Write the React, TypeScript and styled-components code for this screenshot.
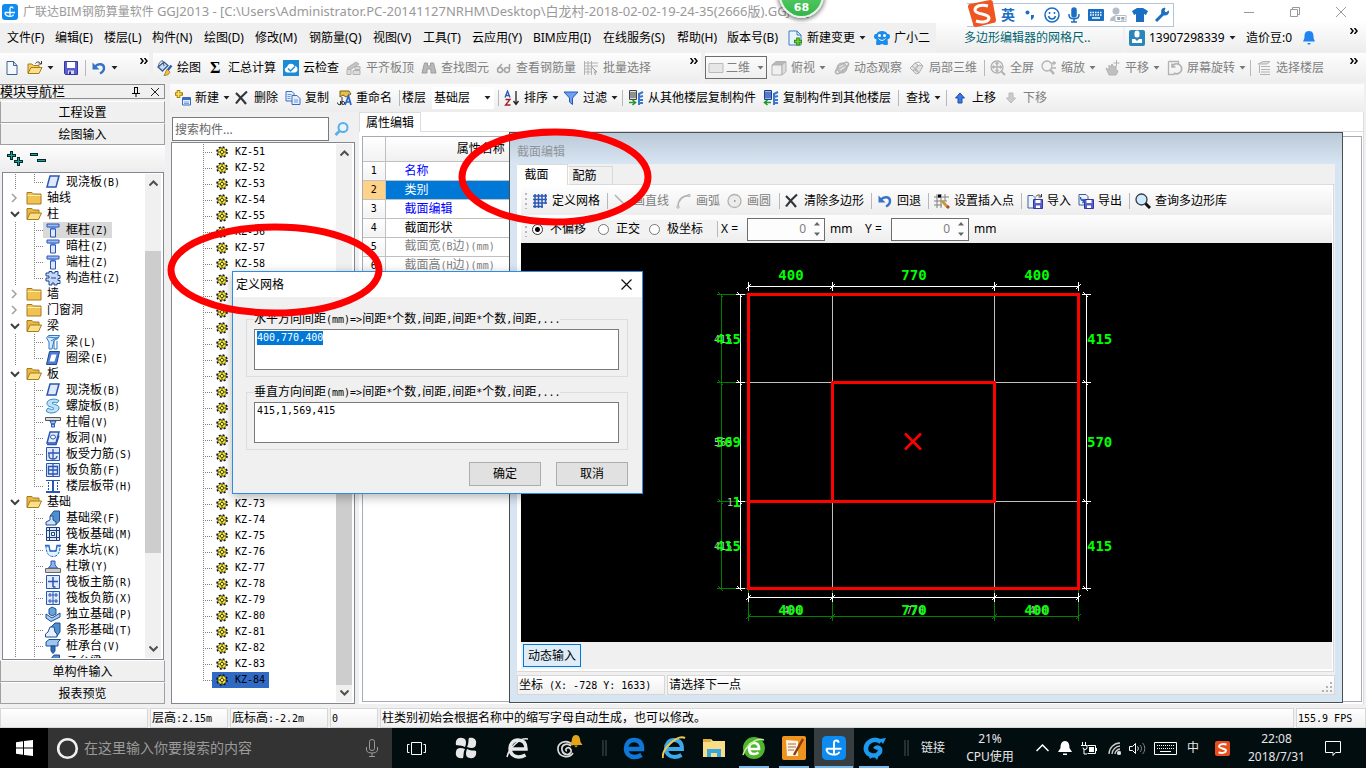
import React, { useEffect, useRef } from "react";
import styled, { createGlobalStyle, css } from "styled-components";

const ui = `"Noto Sans", "Noto Sans CJK SC", sans-serif`;
const mono = `"DejaVu Sans Mono", "Noto Sans CJK SC", monospace`;

const Global = createGlobalStyle`
  * { box-sizing: border-box; }
  body { margin: 0; background: #f0f0f0; font: 12px/16px ${ui}; color: #000; }
  button, input, select, textarea { font: inherit; color: inherit; }
  button { margin: 0; padding: 0; border: 0; background: none; cursor: pointer; white-space: nowrap; }
  ul { list-style: none; margin: 0; padding: 0; }
  svg { display: block; flex: none; }
`;

/* ---------- text with half-width latin glyphs ---------- */

const Half = styled.span`
  font-family: ${mono};
  font-size: 10px;
  white-space: pre;
`;

function Sim({ children }: { children: string }) {
  const parts = children.match(/[\x20-\x7e]+|[^\x20-\x7e]+/g) || [];
  return (
    <>
      {parts.map((p, i) => (/^[\x20-\x7e]/.test(p) ? <Half key={i}>{p}</Half> : <React.Fragment key={i}>{p}</React.Fragment>))}
    </>
  );
}

/* ---------- icons ---------- */

const g = "#b2b2b2";
const gl = "#dcdcdc";

const slab = (
  <path d="M5 2h9l-3 11H2z" fill="#dfeafa" stroke="#2a56b4" strokeWidth="1.5" />
);
const column = (
  <g>
    <path d="M2 2h12v3H2z" fill="#9dbcf0" stroke="#2a56b4" />
    <path d="M4 5h8l-2 2H6z" fill="#5c86d8" />
    <path d="M5.5 7h5v8h-5z" fill="#dbe8fc" stroke="#2a56b4" />
  </g>
);

const icons: Record<string, React.ReactNode> = {
  app: (
    <g>
      <rect width="16" height="16" rx="3" fill="#0d8bf0" />
      <path d="M2.800 8.500H13M8 4.500v7.500M8 4.500c0-2 3-2 3 0M3 8.500c0 4.800 8 4.800 8.500 2" stroke="#fff" strokeWidth="1.300" fill="none" />
    </g>
  ),
  file: <path d="M3 1.500h6.500l3.500 4v9H3z M9.500 1.500v4H13" fill="#f4f8ff" stroke="#41608f" />,
  open: (
    <g>
      <path d="M1 13V4h4l1.500 1.500H12V8" fill="#f3cf6b" stroke="#a87a1b" />
      <path d="M1 13.500L4 7.500h11l-3 6z" fill="#fbe08a" stroke="#a87a1b" />
      <path d="M8.500 3.500c1-2 4-2 5 0M14.500 1v3h-3" fill="none" stroke="#333" />
    </g>
  ),
  save: (
    <g>
      <path d="M1.500 1.500h13v13h-12l-1-1z" fill="#5a5fd0" stroke="#35389a" />
      <path d="M4 2h8v6H4z" fill="#fff" />
      <path d="M5 10.500h6V14H5z" fill="#d8daf5" />
      <path d="M6 11.500h2V14H6z" fill="#35389a" />
    </g>
  ),
  undo: (
    <g fill="none" stroke="#3672c8">
      <path d="M4 6.500C7 3 13 3.500 13 8c0 3-2 4.500-4 5.500" strokeWidth="2.400" />
      <path d="M1.500 2.500v7h7z" fill="#3672c8" stroke="none" />
    </g>
  ),
  bucket: (
    <g>
      <path d="M1 7l6-5 4 3.500L5.500 11z" fill="#c9dbf0" stroke="#355a8c" strokeWidth="1.300" />
      <path d="M1.500 7C1 4 4 0 6 1l1 5" fill="none" stroke="#355a8c" />
      <path d="M14.500 5.500L10 11" stroke="#2b5fb0" strokeWidth="2.400" />
      <path d="M10.500 9.500l2.500 2.500c-1 2.500-3 3.500-6 3.500 1.500-2 1.500-5 3.500-6z" fill="#f0c33c" stroke="#8c6a10" strokeWidth=".7" />
    </g>
  ),
  cloud: (
    <g>
      <rect width="16" height="16" fill="#1b8bd6" />
      <path d="M4 12.500a2.800 2.800 0 0 1 0-5.500 4 4 0 0 1 7.500-1A3.300 3.300 0 0 1 12 12.500z" fill="#fff" />
      <path d="M5 8.500l2.500 2.500L12 6.500" fill="none" stroke="#1b8bd6" strokeWidth="1.500" />
    </g>
  ),
  align: (
    <g fill={gl} stroke={g}>
      <path d="M1 8l9-6 3 2-9 6z" fill="#c4c4c4" />
      <path d="M1 9.500h4v5H1zM7 10.500h7v4H7zM9 6.500h5v3H9z" />
    </g>
  ),
  binoc: <path d="M3.500 3h3v3h3V3h3l2.500 10H10V9H6v4H1z" fill="#b8b8b8" stroke="#9c9c9c" />,
  glasses: (
    <g fill="none" stroke="#a5a5a5" strokeWidth="1.500">
      <circle cx="4" cy="10" r="2.500" />
      <circle cx="11" cy="10" r="2.500" />
      <path d="M6.500 10h2M1.500 9L6 4M13.500 9V4" />
    </g>
  ),
  batch: (
    <g stroke={g} fill="none">
      <path d="M1 3h14M1 6h14M1 9h7M1 12h7M1.500 1v14M5 1v14M8.500 1v14" />
      <path d="M9 7l5 5h-2.500l1 3" fill={gl} stroke="#999" />
    </g>
  ),
  plane: <path d="M1 3.500h14v9H1z" fill="#e6e6e6" stroke="#bbb" />,
  cube: (
    <g stroke={g}>
      <path d="M1 5l4-3.500h10L11 5z" fill="#b8b8b8" />
      <path d="M1 5h10v10H1z" fill="#f0f0f0" />
      <path d="M11 5l4-3.500v10L11 15z" fill={gl} />
    </g>
  ),
  orbit: (
    <g fill="none" stroke={g}>
      <circle cx="8" cy="8" r="5" fill="#c4c4c4" />
      <ellipse cx="8" cy="8" rx="8" ry="3" transform="rotate(-40 8 8)" strokeWidth="1.500" />
      <path d="M5 7l4-2M6 10l5-3" stroke="#eee" />
    </g>
  ),
  local3d: (
    <g fill="#e2e2e2" stroke={g}>
      <path d="M1 8l5-5 3 2-5 6zM6 10l4-5 4 1-4 7zM4 11l3 3 3-1-3-4z" />
      <path d="M6 3l4-1 4 4M3 6l6 5" fill="none" />
    </g>
  ),
  full: (
    <g fill="none" stroke={g} strokeWidth="1.300">
      <circle cx="7" cy="7" r="6" fill="#f2f2f2" />
      <path d="M7 2.500v9M2.500 7h9M5.500 4L7 2.500 8.500 4M5.500 10L7 11.500 8.500 10M4 5.500L2.500 7 4 8.500M10 5.500L11.500 7 10 8.500" />
      <path d="M11.500 11.500L15 15" strokeWidth="2" />
    </g>
  ),
  zoom: (
    <g fill="none" stroke={g} strokeWidth="1.300">
      <circle cx="6" cy="6" r="5" fill="#f4f4f4" />
      <path d="M9.500 10l3.500 4" strokeWidth="2.400" />
      <path d="M13 1v4M11 3h4M11 8h4" />
    </g>
  ),
  pan: (
    <g fill="#c0c0c0" stroke={g}>
      <path d="M1 8l3 2V5l2 2 1-3 2 3 2-1v4l2 1-2 4H4z" />
      <path d="M11.500 0v6M8.500 3h6" fill="none" />
    </g>
  ),
  rotate: (
    <g fill="none" stroke={g} strokeWidth="1.300">
      <path d="M1.500 1.500h10v3M1.500 1.500v13h6" />
      <path d="M5 7a5 5 0 1 1 2 6M5 3.500V7h3.500" strokeWidth="1.700" />
    </g>
  ),
  floors: (
    <g stroke={g} fill={gl}>
      <path d="M2 4l5-2.500h7L11 4zM5 6.500h9M5 9.500h9M5 12h9M4 14.500h10" />
      <path d="M3.500 5v8" />
    </g>
  ),
  newItem: (
    <g>
      <path d="M3.500 0v8M0 4h8" stroke="#a8820a" strokeWidth="3.600" />
      <path d="M3.500 1v6M1 4h5.500" stroke="#ffe457" strokeWidth="1.700" />
      <path d="M7.500 7.500h8v7.500h-8z" fill="#e8f0fc" stroke="#3b6ac0" />
      <path d="M7.500 8h8v2h-8z" fill="#3b6ac0" />
      <path d="M9 12h5M9 13.500h5" stroke="#7aa0e0" />
    </g>
  ),
  del: <path d="M2 3c3 3 7 7 10 11M13 1.500C9 5 5 9 2 13.500" fill="none" stroke="#30353c" strokeWidth="2.200" />,
  copy: (
    <g fill="#e4eefc" stroke="#3b6ac0">
      <path d="M1 1.500h6l2 2V11H1z" />
      <path d="M7 5.500h5l3 3v6H7z" />
      <path d="M2.500 4.500h4M2.500 6.500h3M2.500 8.500h3M9 10h4M9 12h4" fill="none" stroke="#6f96d8" />
    </g>
  ),
  rename: (
    <g>
      <path d="M4 1h9l2 3-5 3-3-2-3 2z" fill="#e5c04a" stroke="#7c5c10" />
      <path d="M1.500 12.500a2 2 0 1 0 3-1.500v4M6 7v7.500M6 12a1.500 1.500 0 1 1 0 2" fill="none" stroke="#333" />
      <path d="M9 15l3.500-9 2.500 9M10 12h4.500" fill="none" stroke="#2b63c4" strokeWidth="1.700" />
    </g>
  ),
  sort: (
    <g fill="none">
      <path d="M1 7.500L3.500 1 6 7.500M2 5.500h3" stroke="#2a56b4" strokeWidth="1.300" />
      <path d="M1.500 9.500H6L1.500 15H6.500" stroke="#a02020" strokeWidth="1.300" />
      <path d="M12 1v13M9.500 11l2.500 3.500L14.500 11" stroke="#222" strokeWidth="1.300" />
    </g>
  ),
  filter: <path d="M1 2h14L9.500 8v6.500L6.500 12V8z" fill="#6fa0ee" stroke="#2558b8" />,
  copyFrom: (
    <g>
      <path d="M1.500.500h7v9h-7z" fill="#ddd" stroke="#444" />
      <path d="M2 3h6M2 5h6M2 7h6" stroke="#444" />
      <path d="M1 12.500h6M4.500 10l3 2.500-3 2.500" stroke="#1e9a2c" strokeWidth="1.600" fill="none" />
      <path d="M11 4l4-2M11 7l4-1M11 10h4M11 13h4M11 3v12" stroke="#3b77cc" strokeWidth="2" fill="none" />
    </g>
  ),
  copyTo: (
    <g>
      <path d="M1.500.500h7v9h-7z" fill="#8fb4ee" stroke="#1e3f94" />
      <path d="M2 3h6M2 5h6M2 7h6" stroke="#1e3f94" />
      <path d="M8 12.500H2M4.500 10l-3 2.500 3 2.500" stroke="#1e9a2c" strokeWidth="1.600" fill="none" />
      <path d="M11 4l4-2M11 7l4-1M11 10h4M11 13h4M11 3v12" stroke="#3b77cc" strokeWidth="2" fill="none" />
    </g>
  ),
  up: <path d="M8 3l4.500 5H10v5H6V8H3.500z" fill="#3a78e0" stroke="#1c4fae" />,
  down: <path d="M8 13L3.500 8H6V3h4v5h2.500z" fill="#ccc" stroke="#b8b8b8" />,
  change: (
    <g>
      <path d="M2 1h8l4 4v10H2z" fill="#eaf4ff" stroke="#3f7fc0" />
      <path d="M10 1v4h4" fill="none" stroke="#3f7fc0" />
      <path d="M11 7.500v8M7 11.500h8" stroke="#2d8a14" strokeWidth="3.600" />
      <path d="M11 8.500v6M8 11.500h6" stroke="#71d02c" strokeWidth="1.600" />
    </g>
  ),
  mascot: (
    <g>
      <path d="M0 6.500c0-2 1-2.500 2.500-2.500C4 0 12 0 13.500 4c1.500 0 2.500.5 2.500 2.500S15 9 13.500 9.500c0 2 1 3 0 5.500h-3L8 14l-2.500 1h-3c-1-2.500 0-3.500 0-5.500C1 9 0 8.500 0 6.500z" fill="#1b8cea" />
      <circle cx="5.500" cy="5.500" r="1.500" fill="#fff" />
      <circle cx="10.500" cy="5.500" r="1.500" fill="#fff" />
      <path d="M4.500 8.500c2 2.500 5 2.500 7 0" stroke="#fff" fill="none" />
    </g>
  ),
  user: (
    <g>
      <rect width="16" height="16" rx="2" fill="#2b85b8" />
      <path d="M5.500 3a2.500 2.500 0 0 1 5 0v2a2.500 2.500 0 0 1-5 0zM3 9h10v4H3z" fill="#fff" />
      <path d="M6 9l2 2 2-2" fill="#2b85b8" />
    </g>
  ),
  bell: (
    <g fill="#1e84f0">
      <path d="M8 1c4 0 4.500 3 4.500 6 0 2 1 3 1.500 4.500H2C2.500 10 3.500 9 3.500 7c0-3 .5-6 4.500-6z" />
      <path d="M6 13h4l-2 2z" />
    </g>
  ),
  grid: <path d="M1 3h14M1 6.500h14M1 10h14M1 13.500h10M3 1v14M6.500 1v14M10 1v14M13.500 1v10" stroke="#2a56b4" strokeWidth="1.500" />,
  line: <path d="M2 2l11 11" stroke={g} strokeWidth="1.500" />,
  arc: (
    <g fill="none" stroke={g}>
      <path d="M2 14C2 7 6 3 13 2.500" strokeWidth="1.500" />
      <path d="M12 1.500h2v2h-2zM1 13h2v2H1z" fill="#fff" />
    </g>
  ),
  circle: (
    <g>
      <circle cx="7.500" cy="8" r="6.500" fill="#ececec" stroke={g} strokeWidth="1.300" />
      <path d="M7 8h1.500" stroke="#888" strokeWidth="1.500" />
    </g>
  ),
  insert: (
    <g>
      <path d="M0 4h15M0 8h13M0 12h8M3 1v14M7 1v14M11 1v7" stroke="#808080" />
      <path d="M4 1.500h3v3H4z" fill="#000" />
      <path d="M8 8l6 6.500" stroke="#c79a2a" strokeWidth="2.600" />
      <path d="M13 13l2 2" stroke="#b5473a" strokeWidth="2.600" />
    </g>
  ),
  imp: (
    <g>
      <path d="M1 2.500h5l2 2V15H1z" fill="#eef4ff" stroke="#41608f" />
      <path d="M6.500 6.500h9v9h-9z" fill="#5a5fd0" stroke="#35389a" />
      <path d="M8.500 7h5v3h-5zM9 12.500h4V15H9z" fill="#fff" />
      <path d="M9 3.500c1-2 4-2 5 0M14.500 1v3h-3" fill="none" stroke="#333" />
    </g>
  ),
  exp: (
    <g>
      <path d="M1 1.500h7l2 2V12H1z" fill="#eef4ff" stroke="#41608f" />
      <path d="M6.500 6.500h9v9h-9z" fill="#5a5fd0" stroke="#35389a" />
      <path d="M8.500 7h5v3h-5zM9 12.500h4V15H9z" fill="#fff" />
      <path d="M2.500 4c0 3 1 4 4 4M4.500 6l2 2-2 2" fill="none" stroke="#2a56b4" strokeWidth="1.300" />
    </g>
  ),
  lens: (
    <g>
      <circle cx="6.500" cy="6.500" r="5.500" fill="#cfeafc" stroke="#333b44" strokeWidth="1.300" />
      <path d="M10.500 10.500l4.500 4.500" stroke="#111" strokeWidth="3" />
    </g>
  ),
  search: (
    <g fill="none" stroke="#58aeea">
      <circle cx="9" cy="6.500" r="4.500" strokeWidth="2" fill="#e8f5fd" />
      <path d="M5.500 10L1.500 14" strokeWidth="2.600" />
    </g>
  ),
  folder: (
    <g>
      <path d="M1 14V2.500h5L7.500 4H15v10z" fill="#efc254" stroke="#a87a1b" />
      <path d="M1.500 5.500h13" stroke="#fdeeb0" />
    </g>
  ),
  folderOpen: (
    <g>
      <path d="M1 13V2.500h5L7.500 4H13v3" fill="#e9b948" stroke="#a87a1b" />
      <path d="M1 13.500L4 7h11.500l-3 6.500z" fill="#fbe08a" stroke="#a87a1b" />
    </g>
  ),
  slab,
  column,
  tie: (
    <g>
      <path d="M4 1.500h3v1.500h3V1.500h3v4h2v3h-2v2h2v3h-3v1.500H9V13H7v2H4v-4H1V8h3V6H1V3h3z" fill="#c5d8f6" stroke="#1f478f" />
      <path d="M6 8h5" stroke="#1f478f" />
    </g>
  ),
  beam: (
    <g>
      <path d="M1.500 4l2-2.500h11l-1.500 3-4 2L7 15H4V8z" fill="#d6eaff" stroke="#2b78c4" />
      <path d="M3 3l9 1M6 7l7-4M9 7v8h3V7" stroke="#2b78c4" fill="none" />
    </g>
  ),
  ring: (
    <g>
      <path d="M4.500 1.500h10l-3 13h-10z" fill="#4c7bd6" stroke="#1f478f" />
      <path d="M6.500 4.500h5l-2 7h-5z" fill="#fff" />
    </g>
  ),
  spiral: <path d="M6 1.500c3-1 6 0 8 1L12 5c-2-1-4-1-5 0 1 2 7 1 7 5 0 3-4 5-8 5-2 0-4-1-5-2l2-3c2 1.500 5 2 6 .5C8 9 2 9 2 5.500 2 3 4 2 6 1.500z" fill="#bfe2fa" stroke="#2b8cc8" />,
  cap: (
    <g>
      <path d="M.500 3.500h15v3H.500z" fill="#ddd" stroke="#555" />
      <path d="M5 7h6l-1.500 3h-3zM6.500 10h3v3h-3z" fill="#a8c8f5" stroke="#2a56b4" />
    </g>
  ),
  hole: (
    <g>
      {slab}
      <ellipse cx="8" cy="7" rx="2.500" ry="2" fill="#fff" stroke="#2a56b4" />
      <path d="M2 14.500h9l3-9" stroke="#2a56b4" fill="none" strokeWidth="1.500" />
    </g>
  ),
  rebarS: (
    <g fill="none" stroke="#2a56b4">
      <path d="M1.500 1.500h13v13h-13z" fill="#dfeafa" />
      <path d="M3 7h11M8 3v10M4 7v3a4 3 0 0 0 8 0" strokeWidth="1.300" />
    </g>
  ),
  rebarF: (
    <g fill="none" stroke="#2a56b4">
      <path d="M1.500 1.500h13v13h-13z" fill="#dfeafa" />
      <path d="M3.500 8V4.500h9V8M3 8h10M3.500 8v4h9V8M8 2v12" strokeWidth="1.300" />
    </g>
  ),
  strip: (
    <g fill="none" stroke="#2a56b4">
      <path d="M1 2.500h14" />
      <path d="M1 14h14M8 3v11" strokeWidth="2" />
      <path d="M3.500 4v9M12.500 4v9" strokeDasharray="2 1" />
    </g>
  ),
  fbeam: (
    <g stroke="#1d4f94">
      <path d="M5 6l4-5h5.500v10l-4 4" fill="#4f8fd0" />
      <path d="M1 15v-3l4-2V6h3v4l3 2v3z" fill="#cfe2f8" />
    </g>
  ),
  raft: (
    <g fill="none" stroke="#1d3f7c">
      <path d="M1.500 1.500h13v13h-13z" fill="#dceafa" />
      <path d="M4.500 1v14M11.500 1v14M1 4.500h14M1 11.500h14" />
      <path d="M6.500 6.500h3v3h-3z" fill="#fff" />
    </g>
  ),
  pit: (
    <g>
      <path d="M1 4h3l1 5h6l1-5h3c0 6-2 10.500-7 10.500S1 10 1 4z" fill="#e6f2ff" stroke="#2b6cc8" strokeDasharray="3 1" />
      <path d="M0 3.500h4l1 5.500h6l1-5.500h4" fill="none" stroke="#2b6cc8" strokeWidth="1.300" />
    </g>
  ),
  pier: (
    <g>
      <path d="M6 3h4v4l2.500 3h-9L6 7z" fill="#8cb4f0" stroke="#2a56b4" />
      <path d="M.500 10.500h15v4H.500z" fill="#ccc" stroke="#666" />
    </g>
  ),
  rebarM: (
    <g fill="none" stroke="#2a56b4">
      <path d="M1.500 1.500h13v13h-13z" fill="#dfeafa" />
      <path d="M3 7.500h10M8 3v10M8 13h2.500" strokeWidth="1.500" />
    </g>
  ),
  rebarX: (
    <g fill="none" stroke="#2a56b4">
      <path d="M1.500 1.500h13v13h-13z" fill="#dfeafa" />
      <path d="M3 5h10M3 11h10M8 2v12M5 3v4M11 3v4M5 9v4M11 9v4" />
    </g>
  ),
  footing: (
    <g stroke="#1d4f94">
      <path d="M1 8l6 4 8-5v4l-9 4.500L1 12z" fill="#a9cdf0" />
      <path d="M4 3l3-2 4 2v5l-4 2-3-2z" fill="#6ea3da" />
    </g>
  ),
  stripF: (
    <g stroke="#1d4f94">
      <path d="M6 5l4-4h5v9l-3 4" fill="#4f8fd0" />
      <path d="M.500 15v-3L3 10l2-5h4l1 5 2 2v3z" fill="#e6f0fc" />
    </g>
  ),
  pile: (
    <g stroke="#1d4f94">
      <path d="M1 4l3-2.500h11.500L13 4v4H1z" fill="#9fc6ee" />
      <path d="M6 8h4v5l-2 2.500L6 13z" fill="#2f6db8" />
    </g>
  ),
};

function Ic({ name, size = 16 }: { name: string; size?: number }) {
  return (
    <svg width={size} height={size} viewBox="0 0 16 16" aria-hidden="true">
      {icons[name]}
    </svg>
  );
}

const Caret = ({ color = "#222" }: { color?: string }) => (
  <svg width="7" height="4" viewBox="0 0 7 4" aria-hidden="true">
    <path d="M.500 0h6L3.500 3.500z" fill={color} />
  </svg>
);

const More = () => (
  <svg width="8" height="6" viewBox="0 0 8 6" aria-hidden="true">
    <path d="M.500 0L3 3 .500 6M4.500 0L7 3 4.500 6" stroke="#000" strokeWidth="1.500" fill="none" />
  </svg>
);

const Gear = () => (
  <svg width="12" height="12" viewBox="0 0 12 12" aria-hidden="true">
    <circle cx="6" cy="6" r="5" fill="none" stroke="#111" strokeWidth="1.600" strokeDasharray="2 1.927" />
    <circle cx="6" cy="6" r="4.200" fill="#fff32e" stroke="#222" strokeWidth=".6" />
    <circle cx="6" cy="6" r="1.700" fill="#fff32e" stroke="#222" strokeWidth=".8" />
    <path d="M6 2v2M6 8v2M2 6h2M8 6h2" fill="none" stroke="#222" strokeWidth=".8" />
  </svg>
);

/* ---------- frame ---------- */

const Screen = styled.div`
  position: relative;
  display: flex;
  flex-direction: column;
  height: 100vh;
  overflow: hidden;
  background: #f0f0f0;
`;

const TitleBar = styled.header`
  display: flex;
  align-items: center;
  height: 23px;
  padding: 0 2px;
  background: #fff;
  color: #999;
`;

const TitleText = styled.div`
  flex: 1;
  padding-left: 5px;
  white-space: nowrap;
`;

const DocPath = styled.span`
  font-size: 13px;
`;

const WinButton = styled.button`
  display: flex;
  justify-content: center;
  width: 46px;
`;

const strip = css`
  display: flex;
  align-items: center;
  min-width: 0;
  overflow: hidden;
  background: linear-gradient(#fdfdfd, #ededed);
`;

const MenuRow = styled.nav`
  display: flex;
  height: 29px;
  justify-content: space-between;
`;

const Menus = styled.div`
  display: flex;
  align-items: center;
  padding-left: 7px;
`;

const Slot = styled.button<{ $w: number; $dim?: boolean }>`
  display: flex;
  flex: none;
  align-items: center;
  gap: 4px;
  width: ${(p) => p.$w}px;
  color: ${(p) => (p.$dim ? "#808080" : "#000")};
  text-align: left;
`;

const MenuSide = styled.div`
  display: flex;
  flex: none;
  width: 430px;
  gap: 2px;
  height: 29px;
`;

const Notice = styled.a`
  ${strip}
  flex: none;
  width: 187px;
  padding-left: 28px;
  color: #006470;
  text-decoration: none;
  white-space: nowrap;
`;

const Account = styled.div`
  ${strip}
  flex: 1;
  padding: 0 8px 0 4px;
`;

const MoreButton = styled.button`
  align-self: flex-start;
  margin: 5px 0 0 auto;
`;

const ToolRow = styled.div`
  display: flex;
  height: 29px;
  margin: 1px 0 2px;
  gap: 4px;
`;

const Tools = styled.div<{ $w?: number; $pad?: number; $end?: number }>`
  ${strip}
  flex: ${(p) => (p.$w ? `0 0 ${p.$w}px` : "1")};
  padding: 0 ${(p) => p.$end ?? 8}px 0 ${(p) => p.$pad ?? 4}px;
`;

const ItemBar = styled.div`
  ${strip}
  flex: none;
  height: 28px;
  padding-left: 5px;
`;

const Sep = styled.span<{ $w: number }>`
  flex: none;
  width: ${(p) => p.$w}px;
  height: 16px;
  border-left: 1px solid #b8b8b8;
`;

const Sigma = styled.span`
  width: 14px;
  font: bold 16px/16px "Liberation Serif", serif;
`;

const ViewBox = styled.label`
  display: flex;
  flex: none;
  align-items: center;
  width: 62px;
  height: 23px;
  margin-right: 4px;
  padding: 0 2px;
  border: 1px solid #6d6d6d;
  color: #808080;
`;

const Select = styled.select`
  flex: 1;
  min-width: 0;
  padding: 0 0 0 2px;
  border: 0;
  appearance: none;
  background: transparent;
`;

const FloorBox = styled.label`
  display: flex;
  flex: none;
  align-items: center;
  width: 62px;
  height: 22px;
  margin-right: 4px;
  padding-right: 3px;
  background: #fff;
`;

const Work = styled.div`
  display: flex;
  flex: 1;
  min-height: 0;
  padding-bottom: 2px;
`;

const Nav = styled.aside`
  display: flex;
  flex: none;
  flex-direction: column;
  width: 165px;
  margin-right: 5px;
`;

const NavHead = styled.div`
  display: flex;
  align-items: center;
  height: 15px;
  margin-bottom: 2px;
  padding-right: 5px;
  border: 1px solid #8c8c8c;
  border-left: 0;
  font-size: 13px;
  line-height: 13px;
  gap: 11px;
`;

const NavTitle = styled.span`
  flex: 1;
`;

const NavButton = styled.button`
  height: 22px;
  flex: none;
  padding-top: 2px;
  border: 1px solid #a0a0a0;
  border-top-color: #fff;
  background: #f0f0f0;
`;

const NavTools = styled.div`
  ${strip}
  flex: none;
  height: 27px;
  padding-left: 7px;
`;

const ListBox = styled.div`
  display: flex;
  flex: 1;
  min-height: 0;
  padding: 1px 2px 1px 0;
  border: 1px solid #828790;
  background: #fff;
`;

const TreeBox = styled(ListBox)`
  margin: 0 1px 0 2px;
`;

const Items = styled.ul`
  flex: 1;
  min-width: 0;
  overflow: hidden;
`;

const Item = styled.li`
  display: flex;
  align-items: center;
  height: 16px;
  white-space: nowrap;
`;

const Leaf = styled.span<{ $on?: boolean }>`
  display: flex;
  align-items: center;
  gap: 5px;
  height: 16px;
  padding: 0 4px 0 2px;
  background: ${(p) => (p.$on ? "#d9d9d9" : "transparent")};
`;

const KzLeaf = styled.span<{ $on?: boolean }>`
  display: flex;
  align-items: center;
  gap: 7px;
  height: 16px;
  padding: 0 4px;
  background: ${(p) => (p.$on ? "#316ac5" : "transparent")};
`;

const ScrollBar = styled.div`
  display: flex;
  flex: none;
  flex-direction: column;
  justify-content: space-between;
  align-items: center;
  width: 16px;
  padding: 6px 0;
  background: #f0f0f0;
`;

const Thumb = styled.div<{ $before: number; $size: number }>`
  width: 16px;
  flex: 0 0 ${(p) => p.$size}%;
  margin-top: ${(p) => p.$before}px;
  margin-bottom: auto;
  background: #cdcdcd;
`;

const Right = styled.div`
  display: flex;
  flex: 1;
  flex-direction: column;
  min-width: 0;
  padding-right: 2px;
`;

const Panes = styled.div`
  display: flex;
  flex: 1;
  min-height: 0;
  gap: 4px;
  background: #f0f0f0;
`;

const Kz = styled.section`
  display: flex;
  flex: none;
  flex-direction: column;
  width: 185px;
  padding-left: 1px;
`;

const SearchRow = styled.label`
  display: flex;
  align-items: center;
  gap: 5px;
  height: 30px;
  padding: 5px 0 1px 1px;
`;

const SearchInput = styled.input`
  width: 157px;
  height: 24px;
  padding: 0 2px;
  border: 1px solid #7a7a7a;
  outline: 0;
  background: #fff;
  &::placeholder { color: #666; opacity: 1; }
`;

const Props = styled.section`
  display: flex;
  flex: 1;
  flex-direction: column;
  min-width: 0;
  border-right: 1px solid #dcdcdc;
  background: #fff;
`;

const PropTabs = styled.div`
  display: flex;
  height: 20px;
  margin: 0 0 4px;
`;

const PropTab = styled.button`
  width: 62px;
  border: solid #dcdcdc;
  border-width: 1px 1px 0;
`;

const TabFill = styled.div`
  flex: 1;
  border-bottom: 1px solid #dcdcdc;
`;

const GridBox = styled.div`
  flex: 1;
  margin: 0 1px 2px 3px;
  border: 1px solid #a5acb5;
  overflow: hidden;
`;

const Table = styled.table`
  width: 214px;
  border-collapse: collapse;
  table-layout: fixed;
  td, th { padding: 0; border: 1px solid #c0c0c0; border-width: 0 1px 1px 0; font-weight: normal; }
  th { background: linear-gradient(#fff, #f0f0f0); }
  thead th { height: 24px; }
  tbody tr { height: 19px; }
`;

const NumHead = styled.th<{ $on?: boolean }>`
  width: 22px;
  && { background: ${(p) => (p.$on ? "#ffd28a" : "linear-gradient(#fff,#f2f2f2)")}; }
`;

const NameCell = styled.td<{ $c: string; $on?: boolean }>`
  && { padding-left: 19px; }
  background: ${(p) => (p.$on ? "#0078d7" : "#fff")};
  color: ${(p) => p.$c};
  white-space: nowrap;
`;

const statusCell = css`
  border: 1px solid #d7d7d7;
  background: linear-gradient(#fff, #f0f0f0);
  white-space: nowrap;
  overflow: hidden;
`;

const Status = styled.footer`
  display: flex;
  flex: none;
  gap: 2px;
  height: 22px;
  padding-top: 2px;
`;

const StatusCell = styled.div<{ $w?: number }>`
  ${statusCell}
  flex: ${(p) => (p.$w ? `0 0 ${p.$w}px` : "1")};
  padding-left: 1px;
  line-height: 18px;
`;

/* ---------- section editor window ---------- */

const Editor = styled.section`
  position: absolute;
  left: 509px;
  right: 23px;
  top: 132px;
  bottom: 65px;
  display: flex;
  flex-direction: column;
  padding: 0 7px;
  border: 1px solid #4a4f52;
  background: #d7e4f2;
  background-image: linear-gradient(#bac9d8, #d7e4f2 30px);
`;

const EditorTitle = styled.h2`
  height: 31px;
  margin: 0;
  color: #8f959c;
  font-size: 12px;
  font-weight: normal;
  line-height: 37px;
`;

const EditorBody = styled.div`
  display: flex;
  flex: 1;
  flex-direction: column;
  min-height: 0;
  margin-bottom: 7px;
  background: #f0f0f0;
`;

const EditTabs = styled.div`
  display: flex;
  align-items: flex-end;
  height: 21px;
`;

const EditTab = styled.button<{ $on?: boolean }>`
  width: ${(p) => (p.$on ? 51 : 45)}px;
  height: ${(p) => (p.$on ? 21 : 19)}px;
  padding-right: 12px;
  border: solid #d9d9d9;
  border-width: ${(p) => (p.$on ? "1px 1px 0" : "1px")};
  border-left-color: #fff;
  background: ${(p) => (p.$on ? "#fff" : "#f0f0f0")};
`;

const EditPage = styled.div`
  display: flex;
  flex: 1;
  flex-direction: column;
  min-height: 0;
  margin-right: 1px;
  padding: 2px 1px 2px 4px;
  border: solid #d9d9d9;
  border-width: 0 1px 1px 0;
  background: #fff;
`;

const EditTools = styled.div`
  ${strip}
  flex: none;
  height: 28px;
  padding-left: 4px;
`;

const Grip = styled.span`
  flex: none;
  width: 2px;
  height: 16px;
  margin-right: 5px;
  background: repeating-linear-gradient(#b8b8b8 0 2px, transparent 2px 5px);
`;

const Radio = styled.label<{ $w: number }>`
  display: flex;
  flex: none;
  align-items: center;
  gap: 7px;
  width: ${(p) => p.$w}px;
  height: 18px;
  background: #f2f2f2;
  input {
    appearance: none;
    width: 11px;
    height: 11px;
    margin: 0;
    border: 1px solid #777;
    border-radius: 50%;
    background: #fff;
  }
  input:checked { background: radial-gradient(#000 0 2px, #fff 3px); border-color: #333; }
`;

const Axis = styled.label`
  display: flex;
  flex: none;
  align-items: center;
  width: 144px;
`;

const AxisName = styled.span`
  width: 26px;
  white-space: nowrap;
`;

const Spin = styled.span`
  display: flex;
  align-items: center;
  width: 78px;
  height: 23px;
  margin-right: 5px;
  padding: 0 4px 0 0;
  border: 1px solid #6d6d6d;
  background: #fdfdfd;
  input { flex: 1; min-width: 0; padding: 0 8px 0 0; border: 0; background: none; color: #808080; text-align: right; outline: 0; }
`;

const Cad = styled.div`
  flex: 1;
  min-height: 0;
  background: #000;
  svg { width: 100%; height: 100%; }
`;

const DynRow = styled.div`
  flex: none;
  height: 27px;
  padding: 2px;
  background: #f0f0f0;
`;

const DynButton = styled.button`
  width: 58px;
  height: 23px;
  border: 1px solid #0078d7;
  background: #dfedf8;
`;

const EditStatus = styled.div`
  display: flex;
  flex: none;
  gap: 2px;
  height: 23px;
  padding-top: 3px;
`;

const Corner = styled(StatusCell)`
  display: flex;
  align-items: flex-end;
  justify-content: space-between;
`;

/* ---------- grid dialog ---------- */

const Dialog = styled.section`
  position: absolute;
  left: 232px;
  top: 271px;
  width: 411px;
  border: 1px solid #2d8ce8;
  background: #f0f0f0;
  box-shadow: 0 3px 10px rgba(0, 0, 0, 0.3);
`;

const DialogTitle = styled.div`
  display: flex;
  align-items: center;
  justify-content: space-between;
  height: 25px;
  padding: 0 10px 0 3px;
  background: #fff;
`;

const DialogForm = styled.form`
  padding: 14px 14px 7px 13px;
`;

const Group = styled.fieldset`
  min-width: 0;
  margin: 0 0 7px;
  padding: 1px 8px 6px 7px;
  border: 1px solid #dcdcdc;
  legend { padding: 0; line-height: 16px; white-space: nowrap; }
`;

const Area = styled.textarea`
  display: block;
  width: 100%;
  height: 41px;
  padding: 1px 2px;
  border: 1px solid #7a7a7a;
  background: #fff;
  font: 10px/14px ${mono};
  outline: 0;
  resize: none;
  &::selection { background: #0078d7; color: #fff; }
`;

const Buttons = styled.div`
  display: flex;
  justify-content: flex-end;
  gap: 15px;
  padding-top: 5px;
`;

const Push = styled.button`
  width: 72px;
  height: 24px;
  border: 1px solid #adadad;
  background: #e1e1e1;
`;

/* ---------- overlays ---------- */

const Marks = styled.svg`
  position: absolute;
  left: 0;
  top: 0;
  pointer-events: none;
`;

const Ball = styled.div`
  position: absolute;
  left: 779px;
  top: -28px;
  width: 45px;
  height: 46px;
  padding-top: 27px;
  border: 2px solid #e8f4e8;
  border-radius: 50%;
  background: linear-gradient(#7fdc7f, #2fb64a);
  box-shadow: 0 1px 4px 1px rgba(0, 0, 0, 0.5);
  color: #fff;
  font: bold 11px/14px "DejaVu Sans", sans-serif;
  text-align: center;
`;

const Ime = styled.div`
  position: absolute;
  top: 3px;
  right: 192px;
  display: flex;
  align-items: center;
  height: 24px;
  padding-left: 30px;
  border: 1px solid #b5c4d6;
  border-left: 0;
  background: #fff;
  color: #1b6fc2;
  font-size: 14px;
  font-weight: bold;
`;

const ImeLogo = styled.svg`
  position: absolute;
  left: 0;
  top: -4px;
`;

const ImeKey = styled.span`
  display: flex;
  justify-content: center;
  width: 22px;
`;

/* ---------- taskbar ---------- */

const Taskbar = styled.div`
  display: flex;
  flex: none;
  height: 40px;
  background: #020d10;
  color: #e6e6e6;
`;

const Start = styled.button`
  display: flex;
  flex: none;
  align-items: center;
  justify-content: center;
  width: 48px;
  background: #000;
`;

const Cortana = styled.label`
  display: flex;
  flex: none;
  align-items: center;
  gap: 5px;
  width: 344px;
  padding: 0 14px 0 8px;
  background: #333;
  input { flex: 1; min-width: 0; padding: 0; border: 0; outline: 0; background: none; font-size: 14px; }
  input::placeholder { color: #9a9a9a; opacity: 1; }
`;

const TaskApp = styled.button<{ $w?: number; $line?: number; $on?: boolean }>`
  display: flex;
  flex: none;
  align-items: center;
  justify-content: center;
  width: ${(p) => p.$w ?? 40}px;
  background: linear-gradient(#76b9ed, #76b9ed) center bottom / ${(p) => p.$line ?? 0}px 2px no-repeat
    ${(p) => (p.$on ? "#363e42" : "transparent")};
`;

const TaskSep = styled.span<{ $w: number }>`
  display: flex;
  flex: none;
  align-items: center;
  justify-content: center;
  width: ${(p) => p.$w}px;
`;

const Tray = styled.div`
  display: flex;
  flex: 1;
  min-width: 0;
  align-items: center;
  justify-content: flex-end;
`;

const TrayCell = styled.div<{ $w: number }>`
  display: flex;
  flex: none;
  flex-direction: column;
  align-items: center;
  justify-content: center;
  width: ${(p) => p.$w}px;
  line-height: 18px;
  white-space: nowrap;
`;

/* ---------- data ---------- */

const menus: [string, number][] = [
  ["文件(F)", 48], ["编辑(E)", 49], ["楼层(L)", 48], ["构件(N)", 52], ["绘图(D)", 51], ["修改(M)", 54], ["钢筋量(Q)", 64],
  ["视图(V)", 50], ["工具(T)", 49], ["云应用(Y)", 61], ["BIM应用(I)", 70], ["在线服务(S)", 74], ["帮助(H)", 50], ["版本号(B)", 60],
];

type Tool = { t?: string; i?: string; w: number; dim?: boolean; arrow?: boolean; sep?: boolean };

const drawTools: Tool[] = [
  { t: "绘图", i: "bucket", w: 53 }, { t: "汇总计算", i: "sigma", w: 73 }, { t: "云检查", i: "cloud", w: 63 },
  { t: "平齐板顶", i: "align", w: 75, dim: true }, { t: "查找图元", i: "binoc", w: 75, dim: true },
  { t: "查看钢筋量", i: "glasses", w: 87, dim: true }, { t: "批量选择", i: "batch", w: 80, dim: true },
];

const viewTools: Tool[] = [
  { t: "俯视", i: "cube", w: 63, dim: true, arrow: true }, { t: "动态观察", i: "orbit", w: 75, dim: true },
  { t: "局部三维", i: "local3d", w: 75, dim: true }, { sep: true, w: 6 }, { t: "全屏", i: "full", w: 51, dim: true },
  { t: "缩放", i: "zoom", w: 64, dim: true, arrow: true }, { t: "平移", i: "pan", w: 62, dim: true, arrow: true },
  { t: "屏幕旋转", i: "rotate", w: 83, dim: true, arrow: true }, { sep: true, w: 6 }, { t: "选择楼层", i: "floors", w: 72, dim: true },
];

const itemToolsA: Tool[] = [
  { t: "新建", i: "newItem", w: 59, arrow: true }, { t: "删除", i: "del", w: 51 }, { t: "复制", i: "copy", w: 51 },
  { t: "重命名", i: "rename", w: 63 }, { sep: true, w: 3 },
];

const itemToolsB: Tool[] = [
  { sep: true, w: 6 }, { t: "排序", i: "sort", w: 59, arrow: true }, { t: "过滤", i: "filter", w: 59, arrow: true }, { sep: true, w: 6 },
  { t: "从其他楼层复制构件", i: "copyFrom", w: 135 }, { t: "复制构件到其他楼层", i: "copyTo", w: 135 }, { sep: true, w: 8 },
  { t: "查找", w: 40, arrow: true }, { sep: true, w: 6 }, { t: "上移", i: "up", w: 51 }, { t: "下移", i: "down", w: 60, dim: true },
];

const editTools: Tool[] = [
  { t: "定义网格", i: "grid", w: 75 }, { sep: true, w: 6 }, { t: "画直线", i: "line", w: 63, dim: true }, { t: "画弧", i: "arc", w: 51, dim: true },
  { t: "画圆", i: "circle", w: 52, dim: true }, { sep: true, w: 5 }, { t: "清除多边形", i: "del", w: 87 }, { sep: true, w: 6 },
  { t: "回退", i: "undo", w: 51 }, { sep: true, w: 6 }, { t: "设置插入点", i: "insert", w: 87 }, { sep: true, w: 6 },
  { t: "导入", i: "imp", w: 51 }, { t: "导出", i: "exp", w: 51 }, { sep: true, w: 6 }, { t: "查询多边形库", i: "lens", w: 100 },
];

function ToolItems({ items }: { items: Tool[] }) {
  return (
    <>
      {items.map((x, k) =>
        x.sep ? (
          <Sep key={k} $w={x.w} />
        ) : (
          <Slot key={k} type="button" $w={x.w} $dim={x.dim}>
            {x.i === "sigma" ? <Sigma>Σ</Sigma> : x.i ? <Ic name={x.i} /> : null}
            {x.t}
            {x.arrow && <Caret color={x.dim ? "#777" : "#222"} />}
          </Slot>
        )
      )}
    </>
  );
}

type Node = { t: string; i?: string; open?: boolean; on?: boolean; last?: boolean };

const tree: Node[] = [
  { t: "现浇板(B)", i: "slab", last: true }, { t: "轴线" }, { t: "柱", open: true }, { t: "框柱(Z)", i: "column", on: true },
  { t: "暗柱(Z)", i: "column" }, { t: "端柱(Z)", i: "column" }, { t: "构造柱(Z)", i: "tie", last: true }, { t: "墙" }, { t: "门窗洞" },
  { t: "梁", open: true }, { t: "梁(L)", i: "beam" }, { t: "圈梁(E)", i: "ring", last: true }, { t: "板", open: true },
  { t: "现浇板(B)", i: "slab" }, { t: "螺旋板(B)", i: "spiral" }, { t: "柱帽(V)", i: "cap" }, { t: "板洞(N)", i: "hole" },
  { t: "板受力筋(S)", i: "rebarS" }, { t: "板负筋(F)", i: "rebarF" }, { t: "楼层板带(H)", i: "strip", last: true },
  { t: "基础", open: true }, { t: "基础梁(F)", i: "fbeam" }, { t: "筏板基础(M)", i: "raft" }, { t: "集水坑(K)", i: "pit" },
  { t: "柱墩(Y)", i: "pier" }, { t: "筏板主筋(R)", i: "rebarM" }, { t: "筏板负筋(X)", i: "rebarX" }, { t: "独立基础(P)", i: "footing" },
  { t: "条形基础(T)", i: "stripF" }, { t: "桩承台(V)", i: "pile" }, { t: "承台梁(F)", i: "fbeam" },
];

const rows: [string, string][] = [
  ["名称", "#0000ff"], ["类别", "#fff"], ["截面编辑", "#0000ff"], ["截面形状", "#000"], ["截面宽(B边)(mm)", "#808080"], ["截面高(H边)(mm)", "#808080"],
];

function TreeRow({ n }: { n: Node }) {
  if (n.i) {
    return (
      <Item>
        <svg width="40" height="16" aria-hidden="true">
          <path d={`M12.500 0V16M31.500 0V${n.last ? 8 : 16}M31 8.500H40`} stroke="#808080" strokeDasharray="1 1" fill="none" />
        </svg>
        <Leaf $on={n.on}>
          <Ic name={n.i} />
          <span><Sim>{n.t}</Sim></span>
        </Leaf>
      </Item>
    );
  }
  return (
    <Item>
      <svg width="21" height="16" aria-hidden="true">
        <path d={n.open ? "M8 6l4 4 4-4" : "M9 4l4 4-4 4"} stroke={n.open ? "#404040" : "#a0a0a0"} strokeWidth={n.open ? 2 : 1.5} fill="none" />
      </svg>
      <Leaf>
        <Ic name={n.open ? "folderOpen" : "folder"} />
        <span>{n.t}</span>
      </Leaf>
    </Item>
  );
}

const Chev = ({ down }: { down?: boolean }) => (
  <svg width="9" height="6" aria-hidden="true">
    <path d={down ? "M.500 .500l4 4 4-4" : "M.500 5.500l4-4 4 4"} stroke="#505050" strokeWidth="2" fill="none" />
  </svg>
);

/* ---------- drawing of the section ---------- */

const xs = [748, 832, 994, 1078];
const ys = [294, 382, 501, 588];

function tickH(x: number, y: number) {
  return `M${x}.5 ${y - 4}v9M${x - 2} ${y + 3}l5 -5`;
}
function tickV(x: number, y: number) {
  return `M${x - 4} ${y}.5h9M${x - 3} ${y - 2}l5 5`;
}

function Section() {
  const dimX = (y: number) => `M748 ${y}.5H1079` + xs.map((x) => tickH(x, y)).join("");
  const dimY = (x: number) => `M${x}.5 294V589` + ys.map((y) => tickV(x, y)).join("");
  return (
    <svg viewBox="521 243 811 399" preserveAspectRatio="xMidYMid meet" role="img" aria-label="截面">
      <g fill="none" shapeRendering="crispEdges">
        <path d={dimY(721) + dimX(616) + xs.map((x) => `M${x}.5 589V617`).join("") + ys.map((y) => `M721 ${y}.5H748`).join("")} stroke="#008000" />
        <path d="M832.500 294V589M994.500 294V589M748 382.500H1079M748 501.500H1079" stroke="#c0c0c0" />
        <path d={dimX(286) + dimX(597) + dimY(740) + dimY(1086)} stroke="#fff" />
      </g>
      <g fill="#c0c0c0" fontFamily='"DejaVu Sans Mono", monospace' fontSize="10">
        <text x="714" y="343">415</text>
        <text x="714" y="446">569</text>
        <text x="727" y="506">1</text>
        <text x="714" y="550">415</text>
        <text x="783" y="614">400</text>
        <text x="906" y="614">770</text>
        <text x="1029" y="614">400</text>
      </g>
      <g fill="#00ff00" fontFamily='"DejaVu Sans Mono", monospace' fontWeight="bold" fontSize="14">
        {[280, 615].map((y) => (
          <g key={y} textAnchor="middle">
            <text x="791" y={y}>400</text>
            <text x="914" y={y}>770</text>
            <text x="1037" y={y}>400</text>
          </g>
        ))}
        <text x="1087" y="344">415</text>
        <text x="1087" y="447">570</text>
        <text x="1087" y="551">415</text>
        <g textAnchor="end">
          <text x="741" y="344">415</text>
          <text x="741" y="447">569</text>
          <text x="741" y="507">1</text>
          <text x="741" y="551">415</text>
        </g>
      </g>
      <path d="M748.500 294.500H1078.500V588.500H748.500zM748.500 501.500H994.500V382.500H832.500V501.500" fill="none" stroke="#f00" strokeWidth="3" />
      <path d="M905 433.500l16 16M921 433.500l-16 16" stroke="#f00" strokeWidth="2.500" />
    </svg>
  );
}

/* ---------- taskbar drawings ---------- */

const Glyph = ({ s = 24, children }: { s?: number; children: React.ReactNode }) => (
  <svg width={s} height={s} viewBox="0 0 24 24" fill="none" aria-hidden="true">{children}</svg>
);

const eShape = "M4 13h16c0-6-3-9-8-9-5 0-8 4-8 8.500C4 18 8 21 12.500 21c3 0 5-.8 7-2";

const Bars = () => (
  <svg width="5" height="16" aria-hidden="true"><path d="M1 0v16M4 0v16" stroke="#4a5356" /></svg>
);

export default function App() {
  const first = useRef<HTMLTextAreaElement>(null);
  useEffect(() => {
    first.current?.focus();
    first.current?.select();
  }, []);

  return (
    <>
      <Global />
      <Screen>
        <TitleBar>
          <Ic name="app" />
          <TitleText>
            广联达BIM钢筋算量软件{" "}
            <DocPath>{"GGJ2013 - [C:\\Users\\Administrator.PC-20141127NRHM\\Desktop\\白龙村-2018-02-02-19-24-35(2666版).GGJ12]"}</DocPath>
          </TitleText>
          <WinButton type="button" aria-label="最小化"><svg width="10" height="10"><path d="M0 5.500h10" stroke="#999" /></svg></WinButton>
          <WinButton type="button" aria-label="还原"><svg width="10" height="10" fill="none"><path d="M.500 2.500h7v7h-7zM2.500 2V.500h7v7H8" stroke="#999" /></svg></WinButton>
          <WinButton type="button" aria-label="关闭"><svg width="10" height="10"><path d="M0 0l10 10M10 0L0 10" stroke="#999" /></svg></WinButton>
        </TitleBar>

        <MenuRow>
          <Menus>
            {menus.map(([t, w]) => <Slot key={t} type="button" $w={w}>{t}</Slot>)}
            <Slot type="button" $w={87}><Ic name="change" />新建变更<Caret /></Slot>
            <Slot type="button" $w={58}><Ic name="mascot" />广小二</Slot>
          </Menus>
          <MenuSide>
            <Notice href="#notice">多边形编辑器的网格尺..</Notice>
            <Account>
              <Slot type="button" $w={117}><Ic name="user" />13907298339<Caret /></Slot>
              <Slot type="button" $w={55}>造价豆:0</Slot>
              <button type="button" aria-label="消息"><Ic name="bell" /></button>
              <MoreButton type="button" aria-label="更多"><More /></MoreButton>
            </Account>
          </MenuSide>
        </MenuRow>

        <ToolRow>
          <Tools $w={149} $end={1}>
            <Slot type="button" $w={23} aria-label="新建工程"><Ic name="file" /></Slot>
            <Slot type="button" $w={36} aria-label="打开"><Ic name="open" /><Caret /></Slot>
            <Slot type="button" $w={22} aria-label="保存"><Ic name="save" /></Slot>
            <Sep $w={6} />
            <Slot type="button" $w={36} aria-label="撤销"><Ic name="undo" /><Caret /></Slot>
            <MoreButton type="button" aria-label="更多"><More /></MoreButton>
          </Tools>
          <Tools $w={548} $end={3}>
            <ToolItems items={drawTools} />
            <MoreButton type="button" aria-label="更多"><More /></MoreButton>
          </Tools>
          <Tools $pad={0}>
            <ViewBox>
              <Ic name="plane" />
              <Select aria-label="视图模式" defaultValue="二维"><option>二维</option><option>三维</option></Select>
              <Caret color="#777" />
            </ViewBox>
            <ToolItems items={viewTools} />
            <MoreButton type="button" aria-label="更多"><More /></MoreButton>
          </Tools>
        </ToolRow>

        <Work>
          <Nav>
            <NavHead>
              <NavTitle>模块导航栏</NavTitle>
              <svg width="8" height="10" fill="none" aria-hidden="true"><path d="M2.500 1v5M5.500 1v5M2 .500h4M0 6.500h8M4 7v3" stroke="#000" /></svg>
              <svg width="8" height="8" aria-hidden="true"><path d="M0 0l8 8M8 0L0 8" stroke="#222" /></svg>
            </NavHead>
            <NavButton type="button">工程设置</NavButton>
            <NavButton type="button">绘图输入</NavButton>
            <NavTools>
              <svg width="40" height="16" aria-hidden="true">
                <path d="M4.500 0v9M0 4.500h9M11.500 6v9M7 10.500h9M23 3.500h8M30 9.500h9" stroke="#062a2a" strokeWidth="3" />
                <path d="M4.500 1v7M1 4.500h7M11.500 7v7M8 10.500h7M24 3.500h6M31 9.500h7" stroke="#12a5a0" />
              </svg>
            </NavTools>
            <TreeBox>
              <Items>{tree.map((n, k) => <TreeRow key={k} n={n} />)}</Items>
              <ScrollBar><Chev /><Thumb $before={65} $size={64} /><Chev down /></ScrollBar>
            </TreeBox>
            <NavButton type="button">单构件输入</NavButton>
            <NavButton type="button">报表预览</NavButton>
          </Nav>

          <Right>
            <ItemBar>
              <ToolItems items={itemToolsA} />
              <Slot as="span" $w={30}>楼层</Slot>
              <FloorBox>
                <Select aria-label="楼层" defaultValue="基础层"><option>基础层</option><option>首层</option></Select>
                <Caret />
              </FloorBox>
              <ToolItems items={itemToolsB} />
            </ItemBar>
            <Panes>
              <Kz>
                <SearchRow>
                  <SearchInput placeholder="搜索构件..." aria-label="搜索构件" />
                  <Ic name="search" />
                </SearchRow>
                <ListBox>
                  <Items>
                    {Array.from({ length: 34 }, (_, k) => (
                      <Item key={k}>
                        <svg width="40" height="16" aria-hidden="true">
                          <path d={`M31.500 0V${k === 33 ? 8 : 16}M31 8.500H40`} stroke="#808080" strokeDasharray="1 1" fill="none" />
                        </svg>
                        <KzLeaf $on={k === 33}><Gear /><Half>{`KZ-${51 + k}`}</Half></KzLeaf>
                      </Item>
                    ))}
                  </Items>
                  <ScrollBar><Chev /><Thumb $before={240} $size={53} /><Chev down /></ScrollBar>
                </ListBox>
              </Kz>
              <Props>
                <PropTabs><PropTab type="button">属性编辑</PropTab><TabFill /></PropTabs>
                <GridBox>
                  <Table>
                    <thead><tr><NumHead /><th scope="col">属性名称</th></tr></thead>
                    <tbody>
                      {rows.map(([t, c], k) => (
                        <tr key={t}>
                          <NumHead scope="row" $on={k === 1}><Half>{String(k + 1)}</Half></NumHead>
                          <NameCell $c={c} $on={k === 1}><Sim>{t}</Sim></NameCell>
                        </tr>
                      ))}
                    </tbody>
                  </Table>
                </GridBox>
              </Props>
            </Panes>
          </Right>
        </Work>

        <Status>
          <StatusCell $w={148} />
          <StatusCell $w={78}><Sim>层高:2.15m</Sim></StatusCell>
          <StatusCell $w={98}><Sim>底标高:-2.2m</Sim></StatusCell>
          <StatusCell $w={48}><Sim>0</Sim></StatusCell>
          <StatusCell>柱类别初始会根据名称中的缩写字母自动生成，也可以修改。</StatusCell>
          <StatusCell $w={70}><Sim>155.9 FPS</Sim></StatusCell>
        </Status>

        <Taskbar>
          <Start type="button" aria-label="开始">
            <svg width="17" height="16"><path d="M0 2.200l7-1V7.500H0zM8 1l9-1v7.500H8zM0 8.500h7v6.300l-7-1zM8 8.500h9V16l-9-1z" fill="#fff" /></svg>
          </Start>
          <Cortana>
            <svg width="23" height="23"><circle cx="11.500" cy="11.500" r="9.300" fill="none" stroke="#f0f0f0" strokeWidth="2.600" /></svg>
            <input placeholder="在这里输入你要搜索的内容" aria-label="搜索" />
            <svg width="12" height="18" fill="none" stroke="#9a9a9a"><path d="M3.500 2.500a2.500 2 0 0 1 5 0v7a2.500 2 0 0 1-5 0zM.500 8v3c0 4 11 4 11 0V8M6 14v3.500M3 17.500h6" /></svg>
          </Cortana>
          <TaskApp type="button" $w={48} aria-label="任务视图">
            <svg width="21" height="15" fill="none" stroke="#fff"><path d="M5.500 1.500h10v12h-10zM3.500 3.500h-2v8h2M17.500 3.500h2v8h-2" /></svg>
          </TaskApp>
          <TaskApp type="button" $w={52} aria-label="风车">
            <Glyph>
              <g fill="#e8e8e8">
                <path d="M11 11C8 9 4 10 2 9 1 4 4 1 8 2c4 0 5 4 3 9z" />
                <path d="M13 11c2-3 1-7 2-9 5-1 8 2 7 6 0 4-4 5-9 3z" />
                <path d="M13 13c3 2 7 1 9 2 1 5-2 8-6 7-4 0-5-4-3-9z" />
                <path d="M11 13c-2 3-1 7-2 9-5 1-8-2-7-6 0-4 4-5 9-3z" />
              </g>
            </Glyph>
          </TaskApp>
          <TaskApp type="button" $w={52} aria-label="浏览器">
            <Glyph><path d={eShape} stroke="#e8e8e8" strokeWidth="3.500" /><path d="M1 21C3 12 14 1 22 3" stroke="#e8e8e8" strokeWidth="1.500" /></Glyph>
          </TaskApp>
          <TaskApp type="button" $w={50} aria-label="提醒">
            <svg width="30" height="28" fill="none" aria-hidden="true"><path d="M19 11C12 4 3 9 4 16s11 9 15 3M17 12c-4-4-10-1-9 4s7 6 9 2c1-3-2-5-4-4s-1 3 0 3" stroke="#dcdcdc" strokeWidth="1.700" /><path d="M22 1c4 0 4 4 4.500 7l2 3h-13l2-3C18 5 18 1 22 1zM20 11.500h4l-2 2z" fill="#e3a51c" /></svg>
          </TaskApp>
          <TaskSep $w={20}><Bars /></TaskSep>
          <TaskApp type="button" aria-label="Edge"><Glyph><path d={eShape} stroke="#0d78d8" strokeWidth="4.500" /></Glyph></TaskApp>
          <TaskApp type="button" aria-label="Internet Explorer"><Glyph><path d={eShape} stroke="#3ca9ea" strokeWidth="4" /><path d="M1 22C-1 14 15-2 23 2" stroke="#f2c94a" strokeWidth="2" /></Glyph></TaskApp>
          <TaskApp type="button" aria-label="文件资源管理器"><Glyph><path d="M1 3h8l2 2h12v16H1z" fill="#fbdc87" /><path d="M1 3h8v3H1z" fill="#e3ae3c" /><path d="M5 21v-8h14v8h-4v-4H9v4z" fill="#35a8e0" /></Glyph></TaskApp>
          <TaskApp type="button" $line={30} aria-label="360浏览器"><Glyph><circle cx="12" cy="12" r="11" fill="#4fb62c" /><path d="M7 13h10c0-4-2-6-5-6s-5 2-5 5.500S9 18 12 18c2 0 3-.4 4.500-1.500" stroke="#fff" strokeWidth="2.700" /><path d="M1 19C4 9 15 1 22 4" stroke="#c8efa6" strokeWidth="1.500" /></Glyph></TaskApp>
          <TaskApp type="button" $line={30} aria-label="便笺"><Glyph><rect width="24" height="24" rx="2" fill="#ee9320" /><path d="M4 4l12 1v15H5z" fill="#fff6dd" /><path d="M6 8h8M6 11h8M6 14h6" stroke="#a66" /><path d="M21 3l-9 16" stroke="#8b3d10" strokeWidth="2.500" /></Glyph></TaskApp>
          <TaskApp type="button" $line={38} $on aria-label="广联达"><Ic name="app" size={24} /></TaskApp>
          <TaskApp type="button" $line={30} aria-label="广联达云"><Glyph><path d="M19 6c-4-3-9-3-13 1-4 5-2 11 3 12 5 2 10-2 9-6-1-2-4-2-5 0" stroke="#1d9bf0" strokeWidth="4.500" /><path d="M17 3l7-1-3 6zM6 18l2 5 4-3 3 4 2-5z" fill="#1d9bf0" /></Glyph></TaskApp>
          <Tray>
            <TrayCell $w={24}><Bars /></TrayCell>
            <TrayCell $w={30}>链接</TrayCell>
            <TrayCell $w={84}><span>21%</span><span>CPU使用</span></TrayCell>
            <TrayCell $w={20}><svg width="13" height="8" fill="none"><path d="M.500 7L6.500 1l6 6" stroke="#fff" strokeWidth="1.500" /></svg></TrayCell>
            <TrayCell $w={25}><svg width="14" height="15" fill="#fff"><path d="M7 0c4 0 4.500 4 4.500 7l2.500 4H0l2.500-4C2.500 4 3 0 7 0zM5 12.500h4v1.500H5z" /></svg></TrayCell>
            <TrayCell $w={25}><svg width="17" height="13" fill="none" stroke="#fff"><path d="M6.500 3.500h8v8h-8M15.500 6v3" /><path d="M8 5h5v5H8z" fill="#fff" stroke="none" /><path d="M1.500 0v3M4.500 0v3M0 3.500h6v2a2 2 0 0 1-4 0M3 7v5h3" /></svg></TrayCell>
            <TrayCell $w={24}><svg width="13" height="13" fill="none" stroke="#ccc" strokeWidth="1.300"><path d="M1 12C1 6 6 1 12 1M4 12c0-4 4-8 8-8M7 12c0-2 2-5 5-5" /><circle cx="11" cy="11" r="1.500" fill="#fff" /></svg></TrayCell>
            <TrayCell $w={23}><svg width="17" height="13" fill="none" stroke="#fff"><path d="M.500 4.500h3l3-3v10l-3-3h-3z" /><path d="M8.500 4.500c1 1 1 3 0 4" /><path d="M11 3c2 2 2 5 0 7M13.500 1c3 3 3 8 0 11" stroke="#888" /></svg></TrayCell>
            <TrayCell $w={32}><svg width="23" height="13" fill="none" stroke="#fff"><path d="M.500 .500h22v12H.500z" /><path d="M3 3.500h17M3 6.500h17" strokeDasharray="1 1" /><path d="M6 9.500h11" /></svg></TrayCell>
            <TrayCell $w={24}>中</TrayCell>
            <TrayCell $w={34}><svg width="15" height="15" fill="none"><rect width="15" height="15" rx="2" fill="#e84e1b" /><path d="M11.500 3.500C7 2.500 4 3.500 4 5.500s7 2 7 4-3 3-7.500 2" stroke="#fff" strokeWidth="2" /></svg></TrayCell>
            <TrayCell $w={75}><span>22:08</span><span>2018/7/31</span></TrayCell>
            <TrayCell $w={38}><svg width="17" height="17" fill="none" stroke="#fff"><path d="M.500 1.500h15v11h-5l-2.500 3v-3h-7.500z" /></svg></TrayCell>
            <TrayCell $w={14} />
          </Tray>
        </Taskbar>

        <Editor>
          <EditorTitle>截面编辑</EditorTitle>
          <EditorBody>
            <EditTabs><EditTab type="button" $on>截面</EditTab><EditTab type="button">配筋</EditTab><TabFill /></EditTabs>
            <EditPage>
              <EditTools><Grip /><ToolItems items={editTools} /></EditTools>
              <EditTools>
                <Grip />
                <Radio $w={66}><input type="radio" name="offset" defaultChecked />不偏移</Radio>
                <Radio $w={51}><input type="radio" name="offset" />正交</Radio>
                <Radio $w={68}><input type="radio" name="offset" />极坐标</Radio>
                <Sep $w={4} />
                {["X =", "Y ="].map((n) => (
                  <Axis key={n}>
                    <AxisName>{n}</AxisName>
                    <Spin>
                      <input defaultValue="0" inputMode="numeric" />
                      <svg width="6" height="14" fill="#666" aria-hidden="true"><path d="M0 3.500L3 0l3 3.500zM0 10.500l3 3.500 3-3.500z" /></svg>
                    </Spin>
                    mm
                  </Axis>
                ))}
              </EditTools>
              <Cad><Section /></Cad>
              <DynRow><DynButton type="button">动态输入</DynButton></DynRow>
            </EditPage>
            <EditStatus>
              <StatusCell $w={148}><Sim>坐标 (X: -728 Y: 1633)</Sim></StatusCell>
              <Corner>
                请选择下一点
                <svg width="12" height="12" fill="#b4b4b4" aria-hidden="true"><path d="M8 0h2v2H8zM4 4h2v2H4zM8 4h2v2H8zM0 8h2v2H0zM4 8h2v2H4zM8 8h2v2H8z" /></svg>
              </Corner>
            </EditStatus>
          </EditorBody>
        </Editor>

        <Dialog role="dialog" aria-label="定义网格">
          <DialogTitle>
            定义网格
            <button type="button" aria-label="关闭"><svg width="11" height="11"><path d="M.500 .500l10 10M10.500 .500l-10 10" stroke="#111" strokeWidth="1.200" /></svg></button>
          </DialogTitle>
          <DialogForm onSubmit={(e) => e.preventDefault()}>
            <Group>
              <legend><Sim>水平方向间距(mm)=&gt;间距*个数,间距,间距*个数,间距,...</Sim></legend>
              <Area ref={first} aria-label="水平方向间距" defaultValue="400,770,400" spellCheck={false} />
            </Group>
            <Group>
              <legend><Sim>垂直方向间距(mm)=&gt;间距*个数,间距,间距*个数,间距,...</Sim></legend>
              <Area aria-label="垂直方向间距" defaultValue="415,1,569,415" spellCheck={false} />
            </Group>
            <Buttons><Push type="submit">确定</Push><Push type="button">取消</Push></Buttons>
          </DialogForm>
        </Dialog>

        <Ime>
          <ImeLogo width="29" height="28" viewBox="0 0 29 28" aria-hidden="true">
            <path d="M3 4L23 0q3 0 3 3l3 17q0 3-3 3L9 27q-3 0-3-3L1 7q0-3 2-3z" fill="#ee5520" />
            <path d="M21 6C14 4 8 6 8 10c0 5 14 3 14 8 0 4-7 5-13 3" fill="none" stroke="#fff" strokeWidth="3" />
          </ImeLogo>
          <ImeKey>英</ImeKey>
          <ImeKey><svg width="10" height="14" fill="#1b6fc2"><circle cx="2.500" cy="4.500" r="2" /><path d="M6 7h3c0 3-1 4-3 5z" /></svg></ImeKey>
          <ImeKey><svg width="16" height="16" fill="none" stroke="#1b6fc2" strokeWidth="1.500"><circle cx="8" cy="8" r="7" /><path d="M4.500 9c1 4 6 4 7 0M5.500 5v2M10.500 5v2" /></svg></ImeKey>
          <ImeKey><svg width="12" height="16" fill="none" stroke="#1b6fc2" strokeWidth="1.500"><path d="M4 3a2 2 0 0 1 4 0v5a2 2 0 0 1-4 0z" fill="#1b6fc2" /><path d="M1 7v1c0 5 10 5 10 0V7M6 12v3M3 15h6" /></svg></ImeKey>
          <ImeKey><svg width="16" height="12"><rect width="16" height="12" rx="1" fill="#1b6fc2" /><path d="M2 3.500h12M2 6h12" stroke="#fff" strokeWidth="1.500" strokeDasharray="1.500 1" /><path d="M4 9h8" stroke="#fff" strokeWidth="1.500" /></svg></ImeKey>
          <ImeKey><svg width="17" height="16" fill="#b5bdc9"><circle cx="6" cy="4" r="3.500" /><path d="M0 14c0-7 12-7 12 0z" /><path d="M5 8.500h11v6H5z" fill="#fff" stroke="#b5bdc9" /><path d="M7 10.500h3v1H7.500v1H10M14.500 10.500h-3v1h2.500v1.500h-3" fill="none" stroke="#9aa4b4" /></svg></ImeKey>
          <ImeKey><svg width="16" height="14"><path d="M5 0h6l5 3-2 4-2-1v8H4V6L2 7 0 3z" fill="#1b6fc2" /></svg></ImeKey>
          <ImeKey><svg width="16" height="16" fill="none" stroke="#1b6fc2"><path d="M2 14l7-7" strokeWidth="3" /><path d="M14.500 4a3.500 3.500 0 1 1-3.500-3L10 4l2 2z" fill="#1b6fc2" /></svg></ImeKey>
        </Ime>

        <Ball>68</Ball>

        <Marks width="700" height="340" fill="none" stroke="#f00" strokeWidth="7" aria-hidden="true">
          <ellipse cx="555" cy="177" rx="93" ry="45" />
          <ellipse cx="275" cy="270" rx="104" ry="43" />
        </Marks>
      </Screen>
    </>
  );
}
